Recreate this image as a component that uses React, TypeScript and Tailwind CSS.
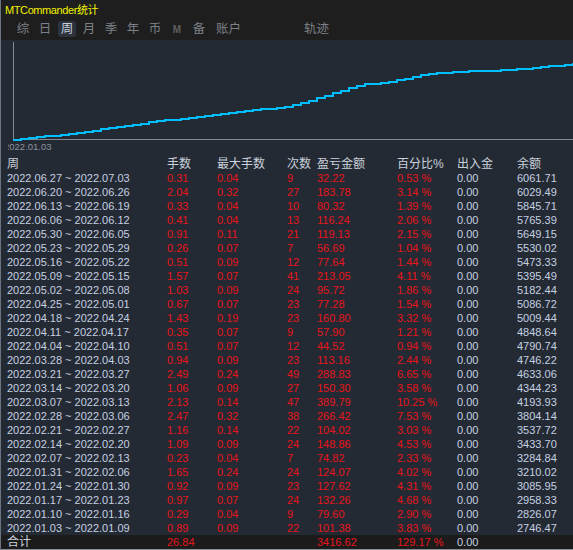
const rows: [string, string, string, string, string, string, string][] = [
  ["2022.06.27 ~ 2022.07.03", "0.31", "0.04", "9", "32.22", "0.53 %", "6061.71"],
  ["2022.06.20 ~ 2022.06.26", "2.04", "0.32", "27", "183.78", "3.14 %", "6029.49"],
  ["2022.06.13 ~ 2022.06.19", "0.33", "0.04", "10", "80.32", "1.39 %", "5845.71"],
  ["2022.06.06 ~ 2022.06.12", "0.41", "0.04", "13", "116.24", "2.06 %", "5765.39"],
  ["2022.05.30 ~ 2022.06.05", "0.91", "0.11", "21", "119.13", "2.15 %", "5649.15"],
  ["2022.05.23 ~ 2022.05.29", "0.26", "0.07", "7", "56.69", "1.04 %", "5530.02"],
  ["2022.05.16 ~ 2022.05.22", "0.51", "0.09", "12", "77.64", "1.44 %", "5473.33"],
  ["2022.05.09 ~ 2022.05.15", "1.57", "0.07", "41", "213.05", "4.11 %", "5395.49"],
  ["2022.05.02 ~ 2022.05.08", "1.03", "0.09", "24", "95.72", "1.86 %", "5182.44"],
  ["2022.04.25 ~ 2022.05.01", "0.67", "0.07", "23", "77.28", "1.54 %", "5086.72"],
  ["2022.04.18 ~ 2022.04.24", "1.43", "0.19", "23", "160.80", "3.32 %", "5009.44"],
  ["2022.04.11 ~ 2022.04.17", "0.35", "0.07", "9", "57.90", "1.21 %", "4848.64"],
  ["2022.04.04 ~ 2022.04.10", "0.51", "0.07", "12", "44.52", "0.94 %", "4790.74"],
  ["2022.03.28 ~ 2022.04.03", "0.94", "0.09", "23", "113.16", "2.44 %", "4746.22"],
  ["2022.03.21 ~ 2022.03.27", "2.49", "0.24", "49", "288.83", "6.65 %", "4633.06"],
  ["2022.03.14 ~ 2022.03.20", "1.06", "0.09", "27", "150.30", "3.58 %", "4344.23"],
  ["2022.03.07 ~ 2022.03.13", "2.13", "0.14", "47", "389.79", "10.25 %", "4193.93"],
  ["2022.02.28 ~ 2022.03.06", "2.47", "0.32", "38", "266.42", "7.53 %", "3804.14"],
  ["2022.02.21 ~ 2022.02.27", "1.16", "0.14", "22", "104.02", "3.03 %", "3537.72"],
  ["2022.02.14 ~ 2022.02.20", "1.09", "0.09", "24", "148.86", "4.53 %", "3433.70"],
  ["2022.02.07 ~ 2022.02.13", "0.23", "0.04", "7", "74.82", "2.33 %", "3284.84"],
  ["2022.01.31 ~ 2022.02.06", "1.65", "0.24", "24", "124.07", "4.02 %", "3210.02"],
  ["2022.01.24 ~ 2022.01.30", "0.92", "0.09", "23", "127.62", "4.31 %", "3085.95"],
  ["2022.01.17 ~ 2022.01.23", "0.97", "0.07", "24", "132.26", "4.68 %", "2958.33"],
  ["2022.01.10 ~ 2022.01.16", "0.29", "0.04", "9", "79.60", "2.90 %", "2826.07"],
  ["2022.01.03 ~ 2022.01.09", "0.89", "0.09", "22", "101.38", "3.83 %", "2746.47"],
]

// curve read off the chart, in page coordinates
const curve: [number, number][] = [
  [12, 139.5], [36, 137.3], [55, 135.3], [77, 133.3], [95, 130], [113, 127.3],
  [146, 122.7], [168, 120], [190, 117.3], [219, 114], [248, 110.7], [270, 108.3],
  [281, 107.3], [292, 105], [311, 100], [329, 94.3], [344, 89.3], [353, 86],
  [365, 84.3], [384, 82.3], [402, 79], [420, 74.7], [439, 73], [453, 72],
  [475, 71], [497, 70.7], [515, 69.3], [534, 68], [552, 66], [573, 64.3],
]

function yAt(x: number) {
  for (let i = 1; i < curve.length; i++) {
    const [x0, y0] = curve[i - 1]
    const [x1, y1] = curve[i]
    if (x <= x1) return y0 + ((y1 - y0) * (x - x0)) / (x1 - x0)
  }
  return curve[curve.length - 1][1]
}

function stepPath() {
  let d = `M12 ${Math.round(yAt(12) - 40)}`
  for (let x = 20; x <= 573; x += 8) {
    d += ` H${x} V${Math.round(yAt(x) - 40)}`
  }
  return d + " H573"
}

const tabs = ["综", "日", "周", "月", "季", "年", "币"]

const cols = "grid grid-cols-[160px_50px_70px_30px_80px_60px_60px_1fr] pl-[6px]"

export default function App() {
  return (
    <div className="w-[573px] h-[550px] overflow-hidden bg-[#242a33] border-l border-[#6b7480] font-['Liberation_Sans','Noto_Sans_CJK_SC',sans-serif] flex flex-col">
      {/* title bar + tabs */}
      <div className="h-[40px] bg-[#1e1e1e] flex flex-col">
        <div className="h-[20px] pl-[4px] pt-[2px] text-[11px] leading-[16px] tracking-[-0.4px] text-[#f2f200]">
          MTCommander统计
        </div>
        <div className="h-[20px] pl-[11px] pb-[2px] flex items-center text-[12.5px] text-[#7c8087]">
          {tabs.map((t, i) => (
            <div key={t} className="w-[22px] flex justify-center">
              {i === 2 ? (
                <span className="w-[18px] h-[16px] flex items-center justify-center rounded-[3px] bg-[#2c333c] text-[#c6cedb]">
                  {t}
                </span>
              ) : (
                t
              )}
            </div>
          ))}
          <div className="w-[22px] flex justify-center text-[10px] font-bold text-[#5e5e5e]">M</div>
          <div className="w-[22px] flex justify-center">备</div>
          <div className="ml-[6px]">账户</div>
          <div className="ml-[63px]">轨迹</div>
        </div>
      </div>

      {/* equity chart */}
      <svg width="573" height="117" className="block shrink-0">
        <defs>
          <clipPath id="lbl">
            <rect x="7" y="100" width="100" height="14" />
          </clipPath>
        </defs>
        <line x1="12.5" y1="2" x2="12.5" y2="100" stroke="#858a92" strokeWidth="1" />
        <line x1="12" y1="99.5" x2="573" y2="99.5" stroke="#858a92" strokeWidth="1" />
        <path d={stepPath()} fill="none" stroke="#00bfff" strokeWidth="2" shapeRendering="crispEdges" />
        <text
          x="3"
          y="110"
          fontSize="9.5"
          fill="#8a939e"
          clipPath="url(#lbl)"
          fontFamily="Liberation Sans, sans-serif"
        >
          2022.01.03
        </text>
      </svg>

      {/* table header */}
      <div className={`${cols} h-[14px] text-[12px] leading-[14px] text-[#c9d1dc]`}>
        <div>周</div>
        <div>手数</div>
        <div>最大手数</div>
        <div>次数</div>
        <div>盈亏金额</div>
        <div>百分比%</div>
        <div>出入金</div>
        <div>余额</div>
      </div>

      {/* weekly rows */}
      <div className="flex flex-col text-[11px] leading-[14px]">
        {rows.map((r) => (
          <div key={r[0]} className={`${cols} h-[14px]`}>
            <div className="text-[#c4d0e2]">{r[0]}</div>
            <div className="text-[#e8141c]">{r[1]}</div>
            <div className="text-[#e8141c]">{r[2]}</div>
            <div className="text-[#e8141c]">{r[3]}</div>
            <div className="text-[#e8141c]">{r[4]}</div>
            <div className="text-[#e8141c]">{r[5]}</div>
            <div className="text-[#c4d0e2]">0.00</div>
            <div className="text-[#c4d0e2]">{r[6]}</div>
          </div>
        ))}
      </div>

      {/* totals */}
      <div className={`${cols} h-[15px] bg-[#1b1b1b] border-b border-[#8a8f96] text-[11px] leading-[14px]`}>
        <div className="text-[12px] text-[#c9d1dc]">合计</div>
        <div className="text-[#e8141c]">26.84</div>
        <div />
        <div />
        <div className="text-[#e8141c]">3416.62</div>
        <div className="text-[#e8141c]">129.17 %</div>
        <div className="text-[#c4d0e2]">0.00</div>
        <div />
      </div>
    </div>
  )
}
